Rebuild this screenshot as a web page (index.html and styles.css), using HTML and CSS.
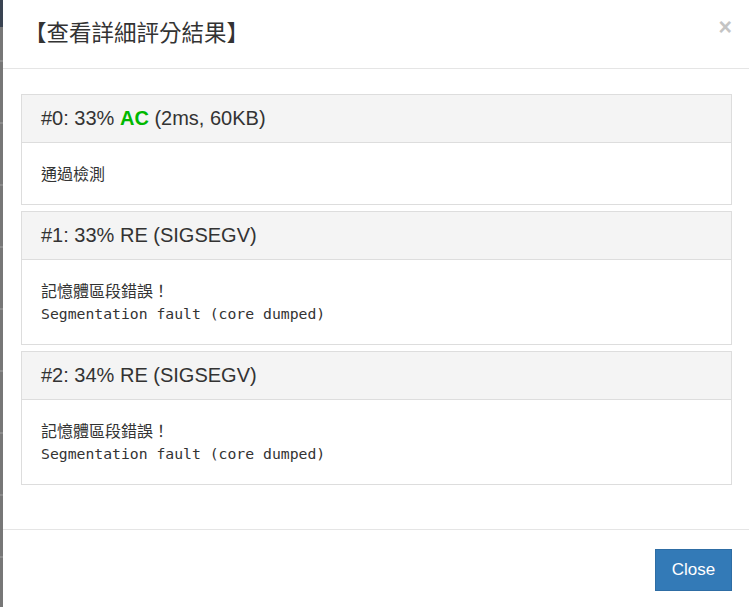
FILE: index.html
```html
<!DOCTYPE html>
<html lang="zh-Hant">
<head>
<meta charset="utf-8">
<title>查看詳細評分結果</title>
<link rel="stylesheet" href="styles.css">
</head>
<body>
<div class="page">
  <div class="backdrop-strip"></div>
  <div class="modal">
    <div class="modal-header">
      <h4 class="modal-title">【查看詳細評分結果】</h4>
      <span class="close">×</span>
    </div>
    <div class="modal-body">
      <div class="panel">
        <div class="panel-heading">#0: 33% <b class="ac">AC</b> (2ms, 60KB)</div>
        <div class="panel-body">
          <div class="msg">通過檢測</div>
        </div>
      </div>
      <div class="panel">
        <div class="panel-heading">#1: 33% RE (SIGSEGV)</div>
        <div class="panel-body">
          <div class="msg">記憶體區段錯誤！</div>
          <div class="mono">Segmentation fault (core dumped)</div>
        </div>
      </div>
      <div class="panel">
        <div class="panel-heading">#2: 34% RE (SIGSEGV)</div>
        <div class="panel-body">
          <div class="msg">記憶體區段錯誤！</div>
          <div class="mono">Segmentation fault (core dumped)</div>
        </div>
      </div>
    </div>
    <div class="modal-footer">
      <button class="btn">Close</button>
    </div>
  </div>
</div>
</body>
</html>
```
FILE: styles.css
```css
html, body {
  margin: 0;
  padding: 0;
  background: #fff;
}
body {
  font-family: "Liberation Sans", Arial, "Noto Sans CJK TC", sans-serif;
  color: #333;
}
.page {
  display: flex;
  height: 607px;
  overflow: hidden;
}
.backdrop-strip {
  width: 3px;
  flex: none;
  background:
    linear-gradient(#3a4452 0, #3a4452 27px, transparent 27px),
    repeating-linear-gradient(#777 0, #777 60px, #8c8c8c 60px, #8c8c8c 62px);
  background-position: 0 0, 0 0;
}
.modal {
  flex: 1;
  display: flex;
  flex-direction: column;
  background: #fff;
}
.modal-header {
  height: 69px;
  box-sizing: border-box;
  border-bottom: 1px solid #e5e5e5;
  display: flex;
  justify-content: space-between;
  align-items: flex-start;
  padding: 0 17px 0 21px;
}
.modal-title {
  margin: 15px 0 0;
  font-family: "Noto Sans CJK TC", sans-serif;
  font-weight: 400;
  font-size: 22.5px;
  line-height: 32px;
  color: #333;
}
.close {
  margin-top: 13px;
  font-family: "Liberation Sans", Arial, sans-serif;
  font-weight: 700;
  font-size: 23px;
  line-height: 28px;
  color: #c4c4c4;
}
.modal-body {
  padding: 25px 17px 44px 18px;
  border-bottom: 1px solid #e5e5e5;
}
.panel {
  border: 1px solid #ddd;
  background: #fff;
}
.panel + .panel {
  margin-top: 6px;
}
.panel-heading {
  background: #f4f4f4;
  border-bottom: 1px solid #ddd;
  padding: 10px 19px;
  font-size: 20px;
  line-height: 27px;
  color: #333;
}
.ac {
  color: #00b800;
  font-weight: 700;
}
.panel-body {
  padding: 19px 19px;
  line-height: 23px;
}
.msg {
  font-family: "Noto Sans CJK TC", sans-serif;
  font-size: 16px;
  color: #333;
}
.mono {
  font-family: "DejaVu Sans Mono", "Liberation Mono", monospace;
  font-size: 14.75px;
  color: #333;
}
.modal-footer {
  display: flex;
  justify-content: flex-end;
  padding: 19px 17px 0 0;
}
.btn {
  font-family: "Liberation Sans", Arial, sans-serif;
  font-size: 17px;
  line-height: 24px;
  padding: 8px 15px;
  color: #fff;
  background: #337ab7;
  border: 1px solid #2e6da4;
  border-radius: 0;
  width: 77px;
}
```
